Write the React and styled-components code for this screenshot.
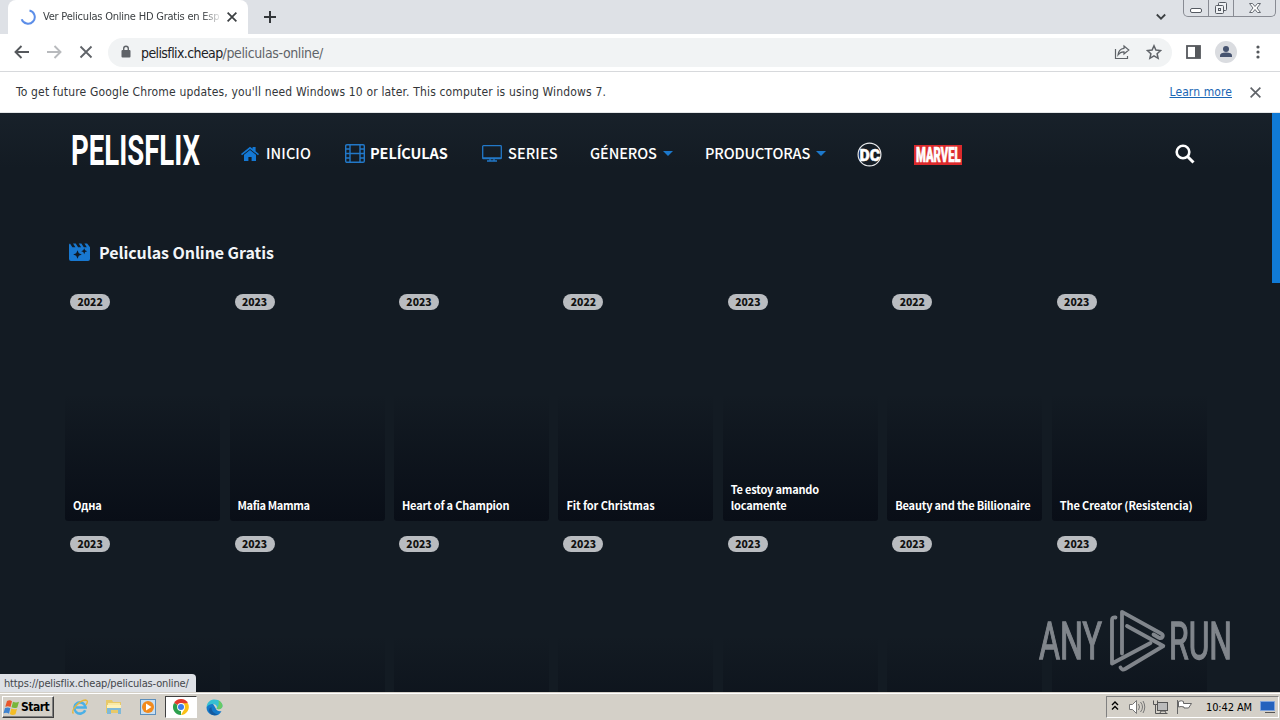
import React from 'react';
import styled, { createGlobalStyle } from 'styled-components';

const GlobalStyle = createGlobalStyle`
  * { box-sizing: border-box; }
  body {
    margin: 0;
    overflow: hidden;
  }
  svg {
    display: block;
    flex: none;
  }
`;

const uiFont = '"DejaVu Sans Condensed", "DejaVu Sans", sans-serif';
const siteFont = '"Noto Sans CJK SC", "Noto Sans", sans-serif';

const Screen = styled.div`
  width: 1280px;
  height: 720px;
  display: flex;
  flex-direction: column;
  background: #131b23;
  overflow: hidden;
  font-family: ${uiFont};
`;

/* ---------- browser ---------- */

const TabStrip = styled.div`
  height: 34px;
  flex: none;
  display: flex;
  align-items: flex-start;
  background: #dee1e6;
  padding-left: 8px;
`;

const Tab = styled.div`
  width: 240px;
  height: 34px;
  display: flex;
  align-items: center;
  background: #fff;
  border-radius: 8px 8px 0 0;
  padding: 0 9px 0 12px;
`;

const TabTitle = styled.div`
  width: 176px;
  margin-left: 7px;
  margin-right: 6px;
  overflow: hidden;
  white-space: nowrap;
  font-size: 11px;
  line-height: 16px;
  letter-spacing: -0.22px;
  color: #3c4043;
  mask-image: linear-gradient(90deg, #000 90%, transparent 102%);
`;

const NewTab = styled.div`
  display: flex;
  padding: 11px 0 0 16px;
`;

const TabSearch = styled.div`
  margin-left: auto;
  padding: 13px 17px 0 0;
`;

const WindowButtons = styled.div`
  display: flex;
  width: 93px;
  height: 17px;
  margin-right: 4px;
  border: 1px solid #888b93;
  border-top: 0;
  border-radius: 0 0 5px 5px;
`;

const WindowButton = styled.div`
  width: ${({ $width }) => $width}px;
  display: flex;
  justify-content: center;
  border-right: ${({ $last }) => ($last ? 0 : '1px solid #888b93')};
`;

const Toolbar = styled.div`
  height: 38px;
  flex: none;
  display: flex;
  align-items: center;
  background: #fff;
  border-bottom: 1px solid #d7d9dc;
  padding: 0 14px 1px;
`;

const ToolButton = styled.div`
  width: 16px;
  height: 16px;
  margin-right: 16px;
`;

const Omnibox = styled.div`
  width: 1064px;
  height: 29px;
  margin-left: -2px;
  margin-right: 14px;
  display: flex;
  align-items: center;
  border-radius: 15px;
  background: #f1f3f4;
  padding: 0 10px 0 12px;
`;

const Address = styled.div`
  flex: 1;
  margin-left: 9px;
  padding-top: 1px;
  font-size: 14px;
  line-height: 18px;
  letter-spacing: -0.6px;
  color: #202124;
  span { color: #5f6368; letter-spacing: -0.38px; }
`;

const Avatar = styled.div`
  width: 22px;
  height: 22px;
  margin: 0 13px 0 14px;
  border-radius: 50%;
  background: #dadce0;
`;

const InfoBar = styled.div`
  height: 41px;
  flex: none;
  display: flex;
  align-items: center;
  background: #fff;
  border-bottom: 1px solid #e4e6e8;
  padding: 0 18px 0 16px;
  font-size: 12px;
  color: #333639;
`;

const InfoText = styled.div`
  flex: 1;
  letter-spacing: 0.16px;
  white-space: nowrap;
`;

const LearnMore = styled.a`
  margin-right: 17px;
  letter-spacing: 0.1px;
  color: #1a66b4;
  text-decoration: underline;
`;

/* ---------- site ---------- */

const Page = styled.main`
  position: relative;
  flex: 1;
  overflow: hidden;
  font-family: ${siteFont};
  background: linear-gradient(#18212a 0, #131b23 55px, #131b23 100%);
`;

const ScrollThumb = styled.div`
  position: absolute;
  top: 0;
  right: 0;
  width: 8px;
  height: 170px;
  background: #107ad6;
`;

const Nav = styled.nav`
  height: 81px;
  display: flex;
  align-items: center;
  padding-left: 70px;
`;

const NavItem = styled.div`
  display: flex;
  align-items: center;
  margin-left: ${({ $gap }) => $gap}px;
  padding-top: ${({ $drop = 0 }) => $drop}px;
`;

const NavLabel = styled.span`
  width: ${({ $width }) => $width}px;
  margin-left: ${({ $indent = 0 }) => $indent}px;
  padding-bottom: 2px;
  white-space: nowrap;
  font-size: 14.5px;
  line-height: 20px;
  font-weight: ${({ $active }) => ($active ? 700 : 500)};
  letter-spacing: ${({ $tracking = -0.1 }) => $tracking}px;
  color: #fff;
`;

const Caret = styled.span`
  margin-left: 6px;
  border: 5px solid transparent;
  border-top-color: #1c78cb;
  border-bottom: 0;
`;

const SectionTitle = styled.h1`
  display: flex;
  align-items: center;
  height: 24px;
  margin: 46px 0 25px 69px;
  gap: 9px;
  font-size: 16px;
  line-height: 24px;
  font-weight: 700;
  letter-spacing: -0.07px;
  color: #f2f5f8;
`;

const Movies = styled.div`
  display: grid;
  grid-template-columns: repeat(7, 155px);
  column-gap: 9.45px;
  row-gap: 10px;
  margin-left: 65.1px;
`;

const Card = styled.article`
  height: 232px;
  display: flex;
  flex-direction: column;
  justify-content: space-between;
  align-items: flex-start;
  padding: 5px 5px 8px;
  border-radius: 3px;
  background: linear-gradient(rgba(6, 10, 18, 0) 45%, #090e17 100%);
`;

const Year = styled.span`
  width: 40px;
  height: 16px;
  border-radius: 8px;
  background: #b9bcc0;
  color: #111;
  text-align: center;
  font-size: 10.4px;
  line-height: 15px;
  font-weight: 900;
`;

const Title = styled.h2`
  margin: 0 0 0 3px;
  width: 142px;
  font-size: 11px;
  line-height: 16px;
  font-weight: 700;
  letter-spacing: ${({ $tracking = -0.2 }) => $tracking}px;
  color: #fff;
`;

const Status = styled.div`
  position: absolute;
  left: 0;
  bottom: 0;
  width: 196px;
  height: 18px;
  padding-left: 4px;
  border-top-right-radius: 4px;
  background: #dee1e6;
  font-family: ${uiFont};
  font-size: 11px;
  line-height: 19px;
  letter-spacing: -0.15px;
  color: #44474b;
`;

const Watermark = styled.div`
  position: absolute;
  left: 1036px;
  top: 493px;
  opacity: 0.52;
`;

/* ---------- taskbar ---------- */

const TaskBar = styled.footer`
  height: 28px;
  flex: none;
  display: flex;
  align-items: center;
  background: #d4d0c8;
  border-top: 1px solid #d4d0c8;
  box-shadow: inset 0 1px #fff;
  padding: 1px 1px 0 2px;
`;

const StartButton = styled.div`
  width: 52px;
  height: 22px;
  display: flex;
  align-items: center;
  border: 1px solid;
  border-color: #fff #404040 #404040 #fff;
  box-shadow: inset -1px -1px #808080;
  font-size: 12px;
  font-weight: 700;
  letter-spacing: -0.5px;
  color: #000;
`;

const TaskIcon = styled.div`
  width: ${({ $active }) => ($active ? 32 : 34)}px;
  height: 22px;
  display: flex;
  align-items: center;
  justify-content: center;
  background: ${({ $active }) => ($active ? '#fff' : 'none')};
  border: ${({ $active }) => ($active ? '1px solid' : 0)};
  border-color: #404040 #fff #fff #404040;
`;

const QuickLaunch = styled.div`
  display: flex;
  margin-left: 9px;
`;

const Tray = styled.div`
  width: 173px;
  height: 22px;
  margin-left: auto;
  display: flex;
  align-items: center;
  padding-left: 4px;
  border: 1px solid;
  border-color: #808080 #fff #fff #808080;
`;

const TrayIcon = styled.svg`
  width: 18px;
  height: 16px;
  margin-left: ${({ $gap }) => $gap}px;
`;

const Clock = styled.span`
  width: 48px;
  margin: 0 6px 0 12px;
  white-space: nowrap;
  font-size: 11px;
  letter-spacing: -0.12px;
  color: #000;
`;

/* ---------- icons ---------- */

const Cross = ({ size = 16, inset = 3, color = '#5f6368', weight = 2 }) => (
  <svg width={size} height={size} viewBox="0 0 16 16" stroke={color} strokeWidth={weight}>
    <path d={`M${inset} ${inset}L${16 - inset} ${16 - inset}M${16 - inset} ${inset}L${inset} ${16 - inset}`} />
  </svg>
);

const Arrow = ({ color, flip }) => (
  <svg width="16" height="16" fill="none" stroke={color} strokeWidth="1.9">
    <path d={flip ? 'M1 8h13M8.5 2l6 6-6 6' : 'M15 8H2M7.5 2l-6 6 6 6'} />
  </svg>
);

const PelisflixLogo = () => (
  <svg width="131" height="52" fill="#fff">
    <text x="1" y="36.5" fontFamily="Roboto, sans-serif" fontSize="42" fontWeight="700" textLength="129" lengthAdjust="spacingAndGlyphs">PELISFLIX</text>
  </svg>
);

const HouseIcon = () => (
  <svg width="18" height="16" viewBox="0 0 18 16" fill="#1478d4">
    <path d="M0 8L9 .8l2.6 2V1h3v4.3L18 8l-1 1.2L9 2.9 1 9.2z" />
    <path d="M3 8.7L9 4l6 4.7V15h-4.4v-4H7.4v4H3z" />
  </svg>
);

const FilmIcon = () => (
  <svg width="20" height="19" fill="none" stroke="#2278c8" strokeWidth="1.4">
    <rect x=".7" y=".7" width="18.6" height="17.6" rx="1.2" />
    <path d="M5 1v17M15 1v17M5 9.5h10M1 5h4M1 9.5h4M1 14h4M15 5h4M15 9.5h4M15 14h4" />
  </svg>
);

const TvIcon = () => (
  <svg width="20" height="17" fill="none" stroke="#2278c8" strokeWidth="1.3">
    <rect x=".7" y=".7" width="18.6" height="13" rx=".8" />
    <path d="M1 12.8h18M8 14v2M12 14v2M5 16h10" />
  </svg>
);

const DcLogo = () => (
  <svg width="25" height="25">
    <circle cx="12.5" cy="12.5" r="11.4" fill="#151d25" stroke="#e8eaec" strokeWidth="1.2" />
    <text x="2.5" y="18.5" fill="#fff" stroke="#fff" strokeWidth=".5" fontFamily="Roboto, sans-serif" fontSize="17" fontWeight="900" textLength="20.5" lengthAdjust="spacingAndGlyphs">DC</text>
  </svg>
);

const MarvelLogo = () => (
  <svg width="48" height="20">
    <rect width="48" height="20" fill="#dc2a2c" />
    <text x="2" y="17" fill="#fff" stroke="#fff" strokeWidth=".7" fontFamily="Roboto, sans-serif" fontSize="20" fontWeight="900" textLength="44.5" lengthAdjust="spacingAndGlyphs">MARVEL</text>
  </svg>
);

const SearchIcon = () => (
  <svg width="20" height="20" fill="none" stroke="#fff">
    <circle cx="8" cy="8" r="6.3" strokeWidth="2.6" />
    <path d="M12.5 12.5l6 6" strokeWidth="3" />
  </svg>
);

const ClapperIcon = () => (
  <svg width="21" height="18">
    <path fill="#1878d0" d="M0 2Q0 .7 1 .5l2.4 3.8h3L4 .4h2.7l2.4 3.9h3L9.7.4h2.7l2.4 3.9h3L15.4.4h2.7L21 4.3V16q0 2-2 2H2q-2 0-2-2z" />
    <path fill="#101a24" d="M8.5 7.200l1.300 3 3 1.300-3 1.300-1.300 3-1.300-3-3-1.300 3-1.300zM15.200 5.200l.9 2.100 2.100.9-2.100.9-.9 2.100-.9-2.100-2.100-.9 2.100-.9z" />
  </svg>
);

const AnyRunMark = () => (
  <svg width="198" height="72" fill="#e6e8ec" fontFamily="Roboto, sans-serif" fontSize="52">
    <text x="3" y="53" stroke="#e6e8ec" strokeWidth="1.3" textLength="63" lengthAdjust="spacingAndGlyphs">ANY</text>
    <g fill="none" stroke="#e6e8ec" strokeWidth="3.8" strokeLinejoin="round" strokeLinecap="round">
      <path d="M79.5 11.500q-3.500-.5-3.500 2.500v43.500l38.500-20.500" />
      <path d="M86 47.500V5.800l39 21.700q2.500 1.500 1.500 3.500t-4 .5l-5-3" />
      <path d="M91 20L127.300 40 89 63q-3 1.500-4.500-1.500" />
    </g>
    <text x="133" y="53" stroke="#e6e8ec" strokeWidth="1.3" textLength="63" lengthAdjust="spacingAndGlyphs">RUN</text>
  </svg>
);

const WindowsFlag = () => (
  <svg width="18" height="17">
    <path fill="#e9562b" d="M4 2q3-1.500 5 .3L7.500 8Q5 6.500 2.300 7.800z" />
    <path fill="#78b63a" d="M10 2.800q3 1.500 6 0L14.300 8.500q-3 1.300-5.800-.2z" />
    <path fill="#3f83d0" d="M2 9q3-1.300 5.300.2L6 14.700Q3.500 13 .5 14.300z" />
    <path fill="#f4bd25" d="M8.300 9.600q3 1.400 5.700.2l-1.500 5.400q-3 1.500-5.600-.2z" />
  </svg>
);

const ExplorerIcon = () => (
  <svg width="18" height="18" fill="none">
    <path d="M14.200 12.200A5.600 5.600 0 1 1 14.600 9.500H5" stroke="#4bb0e6" strokeWidth="2.600" />
    <path d="M2.500 15.500C-1 13 8 2.500 14.500 2q3.500.5.500 5" stroke="#e5b63a" strokeWidth="1.300" />
  </svg>
);

const FolderIcon = () => (
  <svg width="18" height="18">
    <path fill="#e8c968" d="M1 2h6l1 2h8v11H1z" />
    <path fill="#f8e9a6" d="M3 5h12v3H3z" />
    <path fill="#7fb9d8" d="M2 9h14v7h-3v-4H6v4H2z" />
    <path fill="#fff2b8" d="M2 7h14v3H2z" />
  </svg>
);

const PlayerIcon = () => (
  <svg width="17" height="17">
    <rect x=".5" y=".5" width="15" height="15" fill="#c8dff2" stroke="#5b8fbd" />
    <circle cx="8" cy="8" r="6" fill="#f28a1c" />
    <path d="M6 4.500l5.500 3.500L6 11.500z" fill="#fff" />
  </svg>
);

const ChromeIcon = () => (
  <svg width="16" height="16" viewBox="0 0 16 16">
    <path fill="#e33b2e" d="M8 8L1.070 4A8 8 0 0 1 14.930 4z" />
    <path fill="#2da04d" d="M8 8v8A8 8 0 0 1 1.070 4z" />
    <path fill="#fbc116" d="M8 4.300h6.930A8 8 0 0 1 8 16l3.300-6z" />
    <circle cx="8" cy="8" r="3.900" fill="#fff" />
    <circle cx="8" cy="8" r="3" fill="#3c7ded" />
  </svg>
);

const EdgeIcon = () => (
  <svg width="17" height="17" viewBox="0 0 17 17">
    <path fill="#1479c9" d="M.5 8.500q2-6 6-4.500l3 5q1.500 4 6 3.200A8 8 0 0 1 .5 8.500z" />
    <path fill="#36bfd2" d="M.6 8C1 3 4.500.5 8.500.5c5 0 8 3.500 8 6.500 0 3-4 4-6 2.500C12 7 9 4.500 6 5 3 5.300 1.500 7 .6 8z" />
    <path fill="#68ca65" d="M12.500 1.500q4 2 4 5.500c0 3-4 4-6 2.500q3-2.500 2-8z" />
    <path fill="#155a9e" d="M5.500 8q-.5 6 6.500 7.500Q5 18 3 12q-.5-3 2.500-4z" />
  </svg>
);

/* ---------- data ---------- */

const movies = [
  { title: 'Одна', year: 2022 },
  { title: 'Mafia Mamma', year: 2023, tracking: -0.35 },
  { title: 'Heart of a Champion', year: 2023 },
  { title: 'Fit for Christmas', year: 2022, tracking: -0.1 },
  { title: 'Te estoy amando locamente', year: 2023 },
  { title: 'Beauty and the Billionaire', year: 2022 },
  { title: 'The Creator (Resistencia)', year: 2023, tracking: -0.1 },
];

const nextRow = [2023, 2023, 2023, 2023, 2023, 2023, 2023];

const Browser = () => (
  <>
    <TabStrip>
      <Tab>
        <svg width="16" height="16" fill="none" stroke="#5c8ee8" strokeWidth="2">
          <path d="M9.500 1.500a6.700 6.700 0 1 1-7.800 8.700" />
        </svg>
        <TabTitle>Ver Peliculas Online HD Gratis en Esp</TabTitle>
        <Cross size={14} color="#3c4043" />
      </Tab>
      <NewTab>
        <svg width="12" height="12" stroke="#33363a" strokeWidth="2"><path d="M6 0v12M0 6h12" /></svg>
      </NewTab>
      <TabSearch>
        <svg width="10" height="8" fill="none" stroke="#3c4043" strokeWidth="1.800"><path d="M.8 1.500L5 5.700l4.200-4.200" /></svg>
      </TabSearch>
      <WindowButtons>
        <WindowButton $width={25}>
          <svg width="14" height="16" fill="#fff" stroke="#555a62"><rect x="1.500" y="8.500" width="11" height="4" rx="1.500" /></svg>
        </WindowButton>
        <WindowButton $width={25}>
          <svg width="14" height="16" fill="#eef0f3" stroke="#555a62">
            <rect x="4.500" y="2.500" width="8" height="8" rx="1" />
            <rect x="1.500" y="5.500" width="8" height="8" rx="1" />
            <rect x="4.500" y="8.500" width="2" height="2" />
          </svg>
        </WindowButton>
        <WindowButton $width={41} $last>
          <svg width="14" height="16" fill="#fff" stroke="#666b73">
            <path d="M1.500 3.500h3l2.500 3 2.500-3h3L9 8l3.500 4.500h-3L7 9.500l-2.500 3h-3L5 8z" />
          </svg>
        </WindowButton>
      </WindowButtons>
    </TabStrip>
    <Toolbar>
      <ToolButton><Arrow color="#55585c" /></ToolButton>
      <ToolButton><Arrow color="#b8babd" flip /></ToolButton>
      <ToolButton><Cross inset={2.5} weight={1.8} /></ToolButton>
      <Omnibox>
        <svg width="12" height="14" fill="#5f6368">
          <path d="M2.500 5h7q1 0 1 1v5.500q0 1-1 1h-7q-1 0-1-1V6q0-1 1-1z" />
          <path d="M3.700 5V3.500a2.300 2.300 0 0 1 4.600 0V5" fill="none" stroke="#5f6368" strokeWidth="1.400" />
        </svg>
        <Address>pelisflix.cheap<span>/peliculas-online/</span></Address>
        <ToolButton>
          <svg width="16" height="16" fill="none" stroke="#5f6368" strokeWidth="1.200">
            <path d="M1.500 5v9.500h12V12" />
            <path d="M10 2l4.800 4-4.800 4V7.800Q6.500 7.500 4 11q.5-6 6-6.700z" />
          </svg>
        </ToolButton>
        <svg width="16" height="16" fill="none" stroke="#5f6368" strokeWidth="1.500">
          <path d="M8 1.800l1.900 4.300 4.700.5-3.500 3.100 1 4.600L8 11.900l-4.100 2.400 1-4.600L1.400 6.600l4.700-.5z" />
        </svg>
      </Omnibox>
      <svg width="15" height="14" fill="none" stroke="#55585c" strokeWidth="1.800">
        <rect x="1" y="1" width="13" height="12" />
        <path d="M9 1h5v12H9z" fill="#55585c" stroke="none" />
      </svg>
      <Avatar>
        <svg width="22" height="22" fill="#46536f">
          <circle cx="11" cy="8" r="3" />
          <path d="M5 16v-1.500q0-3 6-3t6 3V16z" />
        </svg>
      </Avatar>
      <svg width="16" height="16" fill="#55585c">
        <circle cx="8" cy="3" r="1.600" /><circle cx="8" cy="8" r="1.600" /><circle cx="8" cy="13" r="1.600" />
      </svg>
    </Toolbar>
    <InfoBar>
      <InfoText>To get future Google Chrome updates, you'll need Windows 10 or later. This computer is using Windows 7.</InfoText>
      <LearnMore>Learn more</LearnMore>
      <Cross size={13} inset={2} />
    </InfoBar>
  </>
);

const App = () => (
  <Screen>
    <GlobalStyle />
    <Browser />
    <Page>
      <Nav>
        <PelisflixLogo />
        <NavItem $gap={40}><HouseIcon /><NavLabel $indent={7} $width={45} $tracking={0.1}>INICIO</NavLabel></NavItem>
        <NavItem $gap={34}><FilmIcon /><NavLabel $indent={5} $width={78} $active>PELÍCULAS</NavLabel></NavItem>
        <NavItem $gap={34}><TvIcon /><NavLabel $indent={6} $width={50} $tracking={0.1}>SERIES</NavLabel></NavItem>
        <NavItem $gap={32}><NavLabel $width={67}>GÉNEROS</NavLabel><Caret /></NavItem>
        <NavItem $gap={32}><NavLabel $width={105}>PRODUCTORAS</NavLabel><Caret /></NavItem>
        <NavItem $gap={31} $drop={2}><DcLogo /></NavItem>
        <NavItem $gap={32} $drop={3}><MarvelLogo /></NavItem>
        <NavItem $gap={213}><SearchIcon /></NavItem>
      </Nav>
      <SectionTitle><ClapperIcon />Peliculas Online Gratis</SectionTitle>
      <Movies>
        {movies.map(({ title, year, tracking }) => (
          <Card key={title}><Year>{year}</Year><Title $tracking={tracking}>{title}</Title></Card>
        ))}
        {nextRow.map((year, i) => (
          <Card key={i}><Year>{year}</Year></Card>
        ))}
      </Movies>
      <ScrollThumb />
      <Watermark><AnyRunMark /></Watermark>
      <Status>https://pelisflix.cheap/peliculas-online/</Status>
    </Page>
    <TaskBar>
      <StartButton><WindowsFlag />Start</StartButton>
      <QuickLaunch>
        <TaskIcon><ExplorerIcon /></TaskIcon>
        <TaskIcon><FolderIcon /></TaskIcon>
        <TaskIcon><PlayerIcon /></TaskIcon>
        <TaskIcon $active><ChromeIcon /></TaskIcon>
        <TaskIcon><EdgeIcon /></TaskIcon>
      </QuickLaunch>
      <Tray>
        <svg width="8" height="12" fill="none" stroke="#000" strokeWidth="1.400"><path d="M1 4l3-3 3 3M1 8.500l3-3 3 3" /></svg>
        <TrayIcon $gap={9} fill="#fff" stroke="#777">
          <path d="M1.500 5.500h3l4-4v13l-4-4h-3z" />
          <path d="M10.500 5q2 3 0 6M12.500 3q4 5 0 10M15 2q3.500 6 0 12" fill="none" />
        </TrayIcon>
        <TrayIcon $gap={6} fill="#fff" stroke="#555">
          <rect x="5.500" y="3.500" width="10" height="8" fill="#bbb" />
          <path d="M1.500 1.500v4h2v9h12M5.500 1.500v4h-2M8 14l1-2h4l1 2" fill="none" />
        </TrayIcon>
        <TrayIcon $gap={6} fill="#fff" stroke="#666">
          <path d="M1.500 1v14" />
          <path d="M2.500 2.500q3-1.500 5 0v2h8l-3 4.500H8V8q-3-1-5.500 0z" />
        </TrayIcon>
        <Clock>10:42 AM</Clock>
        <svg width="15" height="13"><path fill="#2462bd" stroke="#7fa4dc" d="M.5.5h14v9H.5z" /><path d="M5 11h10v1H5z" fill="#555" /></svg>
      </Tray>
    </TaskBar>
  </Screen>
);

export default App;
